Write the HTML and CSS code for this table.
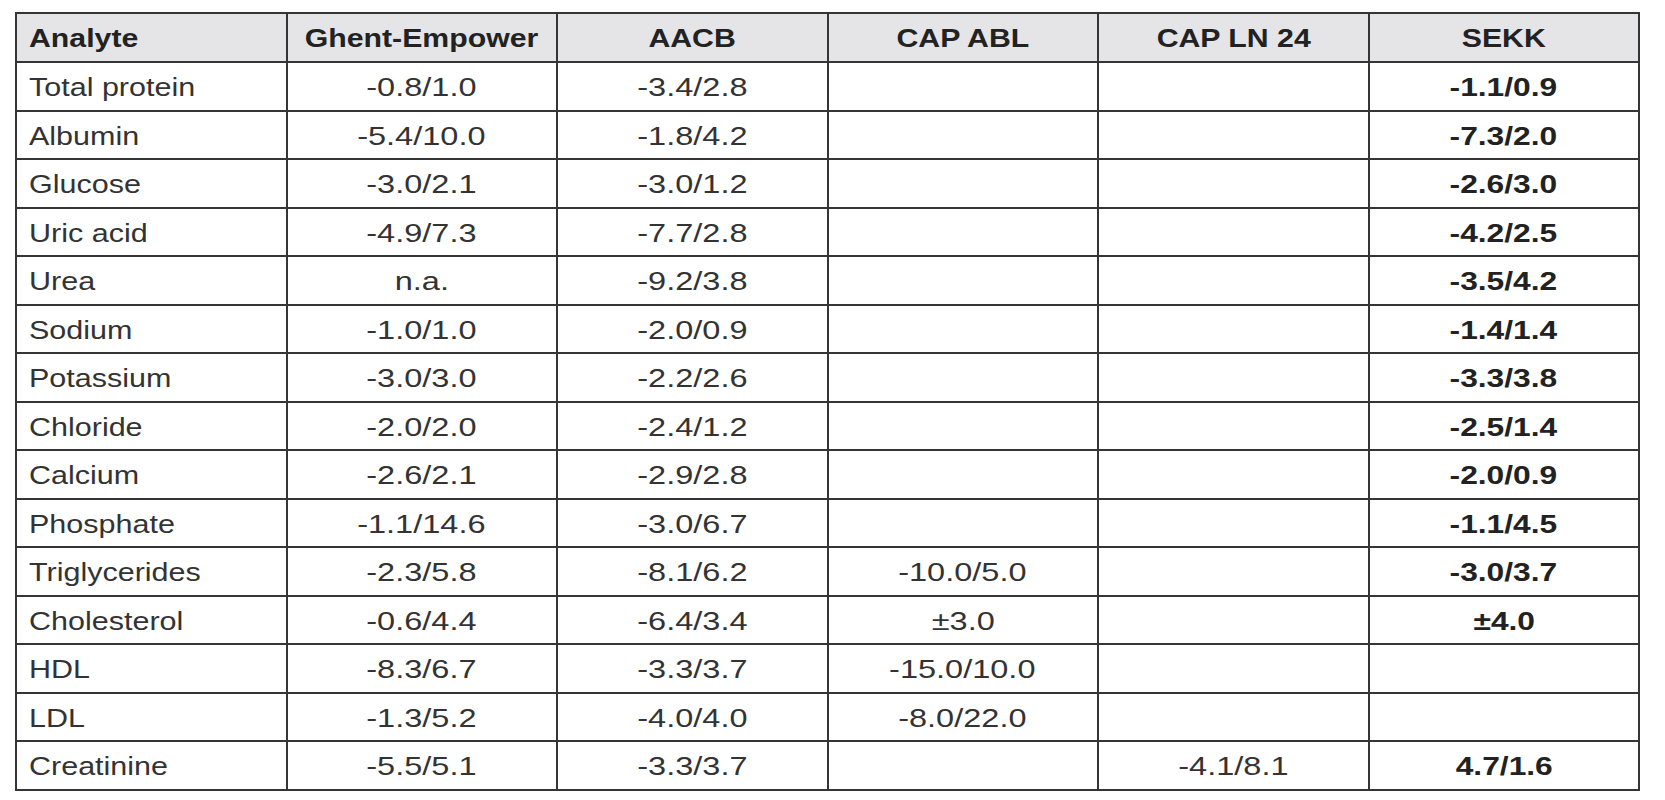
FILE: index.html
```html
<!DOCTYPE html>
<html lang="en">
<head>
<meta charset="utf-8">
<title>Analyte table</title>
<link rel="stylesheet" href="styles.css">
</head>
<body>
<table class="data">
  <colgroup>
    <col class="c"><col class="c"><col class="c"><col class="c"><col class="c"><col class="c">
  </colgroup>
  <thead>
    <tr>
      <th class="first"><span>Analyte</span></th>
      <th><span>Ghent-Empower</span></th>
      <th><span>AACB</span></th>
      <th><span>CAP ABL</span></th>
      <th><span>CAP LN 24</span></th>
      <th><span>SEKK</span></th>
    </tr>
  </thead>
  <tbody>
    <tr><td class="first"><span>Total protein</span></td><td><span>-0.8/1.0</span></td><td><span>-3.4/2.8</span></td><td></td><td></td><td class="b"><span>-1.1/0.9</span></td></tr>
    <tr><td class="first"><span>Albumin</span></td><td><span>-5.4/10.0</span></td><td><span>-1.8/4.2</span></td><td></td><td></td><td class="b"><span>-7.3/2.0</span></td></tr>
    <tr><td class="first"><span>Glucose</span></td><td><span>-3.0/2.1</span></td><td><span>-3.0/1.2</span></td><td></td><td></td><td class="b"><span>-2.6/3.0</span></td></tr>
    <tr><td class="first"><span>Uric acid</span></td><td><span>-4.9/7.3</span></td><td><span>-7.7/2.8</span></td><td></td><td></td><td class="b"><span>-4.2/2.5</span></td></tr>
    <tr><td class="first"><span>Urea</span></td><td><span>n.a.</span></td><td><span>-9.2/3.8</span></td><td></td><td></td><td class="b"><span>-3.5/4.2</span></td></tr>
    <tr><td class="first"><span>Sodium</span></td><td><span>-1.0/1.0</span></td><td><span>-2.0/0.9</span></td><td></td><td></td><td class="b"><span>-1.4/1.4</span></td></tr>
    <tr><td class="first"><span>Potassium</span></td><td><span>-3.0/3.0</span></td><td><span>-2.2/2.6</span></td><td></td><td></td><td class="b"><span>-3.3/3.8</span></td></tr>
    <tr><td class="first"><span>Chloride</span></td><td><span>-2.0/2.0</span></td><td><span>-2.4/1.2</span></td><td></td><td></td><td class="b"><span>-2.5/1.4</span></td></tr>
    <tr><td class="first"><span>Calcium</span></td><td><span>-2.6/2.1</span></td><td><span>-2.9/2.8</span></td><td></td><td></td><td class="b"><span>-2.0/0.9</span></td></tr>
    <tr><td class="first"><span>Phosphate</span></td><td><span>-1.1/14.6</span></td><td><span>-3.0/6.7</span></td><td></td><td></td><td class="b"><span>-1.1/4.5</span></td></tr>
    <tr><td class="first"><span>Triglycerides</span></td><td><span>-2.3/5.8</span></td><td><span>-8.1/6.2</span></td><td><span>-10.0/5.0</span></td><td></td><td class="b"><span>-3.0/3.7</span></td></tr>
    <tr><td class="first"><span>Cholesterol</span></td><td><span>-0.6/4.4</span></td><td><span>-6.4/3.4</span></td><td><span>±3.0</span></td><td></td><td class="b"><span>±4.0</span></td></tr>
    <tr><td class="first"><span>HDL</span></td><td><span>-8.3/6.7</span></td><td><span>-3.3/3.7</span></td><td><span>-15.0/10.0</span></td><td></td><td></td></tr>
    <tr><td class="first"><span>LDL</span></td><td><span>-1.3/5.2</span></td><td><span>-4.0/4.0</span></td><td><span>-8.0/22.0</span></td><td></td><td></td></tr>
    <tr><td class="first"><span>Creatinine</span></td><td><span>-5.5/5.1</span></td><td><span>-3.3/3.7</span></td><td></td><td><span>-4.1/8.1</span></td><td class="b"><span>4.7/1.6</span></td></tr>
  </tbody>
</table>
</body>
</html>
```

FILE: styles.css
```css
html, body {
  margin: 0;
  padding: 0;
  background: #ffffff;
}

body {
  padding: 12px 0 0 15px;
  font-family: "Liberation Sans", Arial, Helvetica, sans-serif;
  color: #333333;
}

.data {
  border-collapse: collapse;
  table-layout: fixed;
  width: 1625px;
  border: 2px solid #262626;
}

.data col.c {
  width: 270.5px;
}

.data thead tr {
  height: 49px;
}

.data tbody tr {
  height: 48.5px;
}

.data th,
.data td {
  border: 2px solid #353535;
  padding: 3px 12px 0;
  text-align: center;
  vertical-align: middle;
  font-size: 25px;
  line-height: 1;
  white-space: nowrap;
  overflow: visible;
}

.data th {
  background: #e5e5e7;
  font-weight: bold;
  color: #222222;
  padding-top: 1px;
}

.data th span,
.data td span {
  display: inline-block;
  transform-origin: center center;
}

.data th span {
  transform: scaleX(1.21);
}

.data td span {
  transform: scaleX(1.3);
}

.data td.b span {
  transform: scaleX(1.27);
}

.data td.b {
  font-weight: bold;
  color: #222222;
}

.data th.first,
.data td.first {
  text-align: left;
}

.data th.first span {
  transform: scaleX(1.21);
  transform-origin: left center;
}

.data td.first span {
  transform: scaleX(1.22);
  transform-origin: left center;
}
```
